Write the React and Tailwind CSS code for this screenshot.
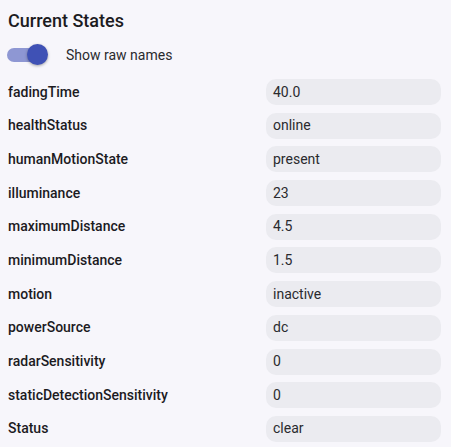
const states = [
  ['fadingTime', '40.0'],
  ['healthStatus', 'online'],
  ['humanMotionState', 'present'],
  ['illuminance', '23'],
  ['maximumDistance', '4.5'],
  ['minimumDistance', '1.5'],
  ['motion', 'inactive'],
  ['powerSource', 'dc'],
  ['radarSensitivity', '0'],
  ['staticDetectionSensitivity', '0'],
  ['Status', 'clear'],
];

export default function App() {
  return (
    <div
      className="w-[451px] h-[447px] bg-[#f7f6fb] text-[#1c1b1f] pl-2 pr-[10px] pt-[9px] overflow-hidden"
      style={{ fontFamily: 'Roboto, "Liberation Sans", sans-serif' }}
    >
      <h2 className="text-[18px] leading-[24px] font-medium">Current States</h2>
      <div className="flex items-center mt-[10px] h-[24px]">
        <div className="relative w-[41px] h-[24px] -ml-[1px]">
          <div className="absolute left-0 top-[5px] w-[37px] h-[14px] rounded-full bg-[#8e97d3]" />
          <div className="absolute left-[20px] top-[1px] w-[21px] h-[21px] rounded-full bg-[#3f51b5] shadow-[0_1px_3px_rgba(0,0,0,0.35)]" />
        </div>
        <span className="ml-[18px] text-[14px] text-[#2a2a2e]">Show raw names</span>
      </div>
      <div className="flex flex-col gap-[7.7px] mt-[12px]">
        {states.map(([name, value]) => (
          <div key={name} className="flex items-center h-[26px]">
            <div className="w-[258px] text-[14px] font-medium text-[#1c1b1f]">{name}</div>
            <div className="flex-1 h-[26px] rounded-[10px] bg-[#ebebf0] px-[7px] flex items-center text-[14px] text-[#2a2a2e]">
              {value}
            </div>
          </div>
        ))}
      </div>
    </div>
  );
}
